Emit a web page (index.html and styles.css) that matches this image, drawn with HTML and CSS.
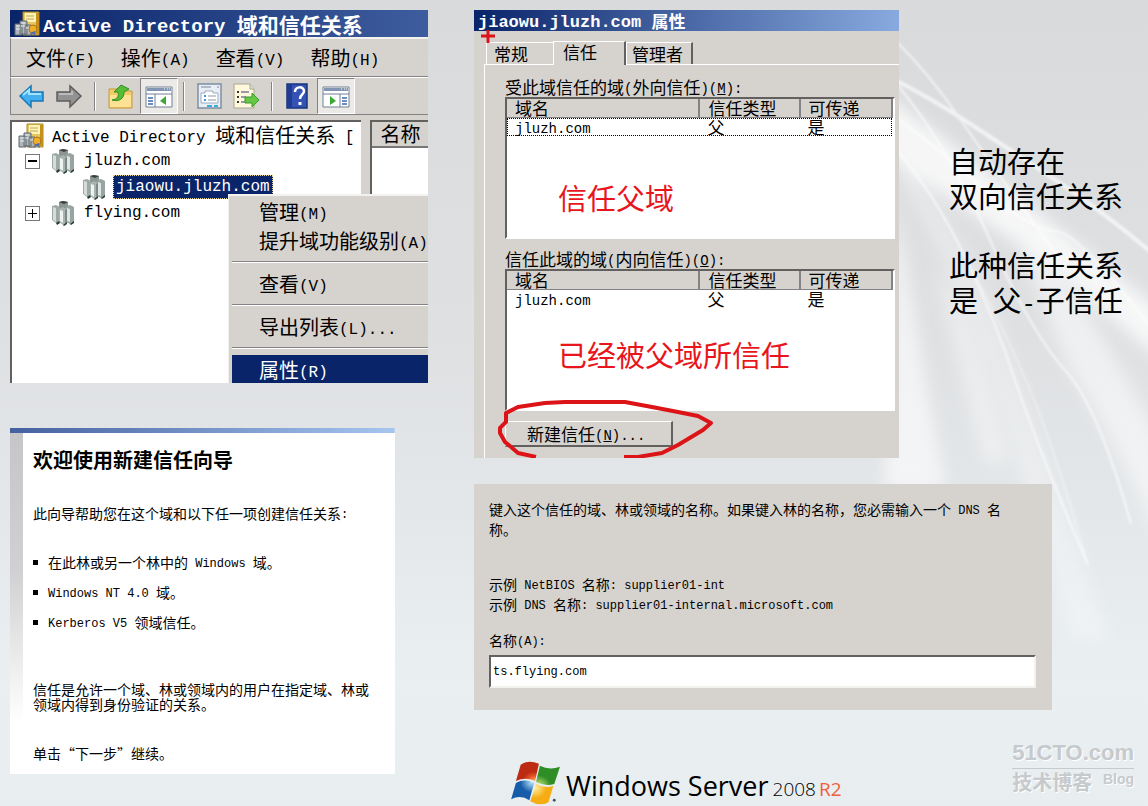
FILE: index.html
```
<!DOCTYPE html>
<html lang="zh-CN">

<head>
    <meta charset="UTF-8" />
    <meta name="viewport" content="width=device-width, initial-scale=1.0" />
    <title>Active Directory 域和信任关系</title>
    <link rel="stylesheet" href="styles.css">
</head>

<body>
    <svg class="backdrop" viewBox="0 0 1148 806" preserveAspectRatio="none" aria-hidden="true">
        <defs>
            <filter id="soft" x="-20%" y="-20%" width="140%" height="140%"><feGaussianBlur stdDeviation="8" /></filter>
            <filter id="thin"><feGaussianBlur stdDeviation="1" /></filter>
        </defs>
        <g fill="#fff" filter="url(#soft)">
            <path opacity=".75" d="M880 90 Q960 150 1010 190 T1160 310 V360 Q1060 270 990 225 T880 150z" />
            <path opacity=".5" d="M1020 245 Q1070 280 1110 350 T1160 440 V540 Q1110 430 1070 370z" />
            <path opacity=".3" d="M900 150 Q970 240 1015 370 T1110 640 L1070 640 Q1030 500 990 380 T900 180z" />
            <path opacity=".4" d="M935 270 Q970 300 1008 463 H985z" />
            <path opacity=".6" d="M895 200 Q915 320 945 490 H885z" />
        </g>
        <g fill="none" stroke="#fff" stroke-width="2" filter="url(#thin)" opacity=".65">
            <path d="M895 40 Q930 75 958 116 T1060 260" />
            <path d="M895 80 Q930 98 958 116 T1048 175 T1160 260" stroke-width="4" />
            <path d="M897 84 Q950 150 991 242 T1065 370 T1131 524" />
            <path d="M897 118 Q940 150 985 190 T1055 231 T1160 340" />
            <path d="M897 150 Q935 195 965 257 T1015 380 T1088 565" />
            <path d="M965 257 Q1000 320 1026 380 T1088 565" stroke-width="1" />
        </g>
    </svg>

    <!-- shared symbols for the console tree -->
    <svg class="symbols" aria-hidden="true">
        <symbol id="console" viewBox="0 0 26 25">
            <path d="M9 1h16v23H9z" fill="#e6c75d" stroke="#a98524" />
            <path d="M11 2h11v9H11z" fill="#fff4b5" />
            <path d="M12 5h8M12 8h8" stroke="#bea65d" />
            <path d="M22 2h3v21h-3z" fill="#c5911c" />
            <path d="M1 13h7v11H1zM6 10h7v13H6zM11 14h6v10h-6z" fill="#aeb6bc" stroke="#60686f" />
            <path d="M2 15h4M2 18h4M7 12h4M7 15h4M12 17h3" stroke="#eef3f5" />
            <circle cx="19" cy="18" r="4" fill="#efae28" stroke="#ad7316" />
            <path d="M18 21l-2 4 3-2 3 2-1-5" fill="#526ca8" />
        </symbol>
        <symbol id="domain" viewBox="0 0 24 25">
            <path d="M8 1l4-1 5 1v8H8z" fill="#8b9592" />
            <path d="M8 1l4-1 5 1-4 2z" fill="#39423f" />
            <path d="M1 5l4-1 4 2v14l-4 2-4-3z" fill="#9da9a6" />
            <path d="M2 6l3 1v14l-3-2z" fill="#d5dcda" />
            <path d="M15 5l4-1 4 2v15l-4 2-4-2z" fill="#98a4a1" />
            <path d="M16 7l3 1v13l-3-1z" fill="#dfe5e4" />
            <path d="M8 8l4-2 4 2v14l-4 2-4-3z" fill="#a9b4b1" />
            <path d="M9 9l3 1v12l-3-2z" fill="#eef2f1" />
            <path d="M14 9l2-1v13l-2 1z" fill="#7c8986" />
            <path d="M5 22l3-2 1 2-3 2zM12 24l4-3v2l-3 2zM19 23l4-3v2l-3 2z" fill="#243a30" />
        </symbol>
    </svg>

    <main class="board">
        <div class="column">
            <section class="window console">
                <header class="titlebar">
                    <svg class="app-icon"><use href="#console" /></svg>
                    <h1><span class="latin">Active Directory </span>域和信任关系</h1>
                </header>
                <nav class="menubar">
                    <button type="button">文件<span class="latin">(F)</span></button>
                    <button type="button">操作<span class="latin">(A)</span></button>
                    <button type="button">查看<span class="latin">(V)</span></button>
                    <button type="button">帮助<span class="latin">(H)</span></button>
                </nav>
                <div class="toolbar">
                    <button type="button" class="tool" aria-label="后退">
                        <svg viewBox="0 0 28 26"><path d="M2 13L13 3v6h12v9H13v6z" fill="#42b0ee" stroke="#1978b8" stroke-width="1.5" /><path d="M5 12l6-5v4h12" fill="none" stroke="#a2e4ff" stroke-width="2" /></svg>
                    </button>
                    <button type="button" class="tool" aria-label="前进">
                        <svg viewBox="0 0 28 26"><path d="M26 13L15 3v6H2v9h13v6z" fill="#929292" stroke="#5d5d5d" stroke-width="1.5" /><path d="M4 11h13V8" fill="none" stroke="#bbb" stroke-width="2" /></svg>
                    </button>
                    <span class="divider"></span>
                    <button type="button" class="tool" aria-label="上移">
                        <svg viewBox="0 0 28 26"><path d="M3 6h8l2 2h13v17H3z" fill="#f1cc67" stroke="#c9983c" /><path d="M4 12h21v12H4z" fill="#fce292" /><path d="M6 17c6-1 7-4 6-8H8l7-7 8 4-5 3c0 7-5 10-12 8z" fill="#58bd36" stroke="#318d23" /></svg>
                    </button>
                    <button type="button" class="tool pressed" aria-label="显示控制台树">
                        <svg viewBox="0 0 28 26"><path d="M1 4h26v20H1z" fill="#fff" stroke="#718096" /><path d="M2 5h24v3H2z" fill="#8295b1" /><path d="M1 11h26M10 11v13" stroke="#718096" /><path d="M3 15h5M3 18h5M3 21h5" stroke="#3c68ad" stroke-width="1.5" /><path d="M21 13v9l-6-4z" fill="#3ca935" /><path d="M19 6h1M22 6h1M24 6h1" stroke="#fff" /></svg>
                    </button>
                    <span class="divider"></span>
                    <button type="button" class="tool" aria-label="属性">
                        <svg viewBox="0 0 28 26"><path d="M3 1h23v24H3z" fill="#e9eef4" stroke="#7c8fa5" stroke-width="1.5" /><path d="M6 10h4V8h8v2h5v10H6z" fill="#fff" stroke="#9aabc1" /><path d="M6 4h10M22 4h2" stroke="#b1bac6" stroke-width="2" /><path d="M9 13h2M9 17h2" stroke="#3b9bd8" stroke-width="2" /><path d="M13 13h8M13 17h8" stroke="#8a98ab" /><path d="M12 23h5M19 23h4" stroke="#38afd9" stroke-width="2" /></svg>
                    </button>
                    <button type="button" class="tool export" aria-label="导出列表">
                        <svg viewBox="0 0 28 26"><path d="M2 1h16l4 5v19H2z" fill="#fff8dc" stroke="#aaa890" /><path d="M18 1v5h4" fill="#ddd" stroke="#aaa890" /><path d="M5 9h2M5 14h2M5 19h2" stroke="#333" stroke-width="2" /><path d="M9 9h8M9 14h5M9 19h5" stroke="#99a" stroke-width="2" /><path d="M13 14h7v-4l7 7-7 7v-4h-7z" fill="#65c744" stroke="#399d29" /></svg>
                    </button>
                    <span class="divider"></span>
                    <button type="button" class="tool" aria-label="帮助">
                        <svg viewBox="0 0 28 26"><path d="M4 1h20v24H4z" fill="#3453b4" stroke="#17347e" stroke-width="1.5" /><path d="M5 2h4v22H5z" fill="#203b91" /><path d="M12 9c0-6 9-6 9-1 0 4-4 3-4 8" fill="none" stroke="#fff" stroke-width="2.5" /><path d="M15.500 19h3v3h-3z" fill="#fff" /></svg>
                    </button>
                    <button type="button" class="tool pressed" aria-label="显示操作窗格">
                        <svg viewBox="0 0 28 26"><path d="M1 4h26v20H1z" fill="#fff" stroke="#718096" /><path d="M2 5h24v3H2z" fill="#8295b1" /><path d="M1 11h26M18 11v13" stroke="#718096" /><path d="M20 15h5M20 18h5M20 21h5" stroke="#3c68ad" stroke-width="1.5" /><path d="M8 13v9l6-4z" fill="#3ca935" /><path d="M19 6h1M22 6h1M24 6h1" stroke="#fff" /></svg>
                    </button>
                </div>
                <div class="panes">
                    <ul class="tree">
                        <li class="root"><svg><use href="#console" /></svg><span><span class="latin">Active Directory </span>域和信任关系<span class="latin"> [</span></span></li>
                        <li><span class="toggle minus"></span><svg><use href="#domain" /></svg><span class="latin">jluzh.com</span></li>
                        <li class="child"><svg><use href="#domain" /></svg><span class="latin selected">jiaowu.jluzh.com</span></li>
                        <li><span class="toggle plus"></span><svg><use href="#domain" /></svg><span class="latin">flying.com</span></li>
                    </ul>
                    <div class="details">
                        <div class="details-head">名称</div>
                    </div>
                </div>
                <div class="context-menu">
                    <button type="button">管理<span class="latin">(M)</span></button>
                    <button type="button">提升域功能级别<span class="latin">(A)</span></button>
                    <hr>
                    <button type="button">查看<span class="latin">(V)</span></button>
                    <hr>
                    <button type="button">导出列表<span class="latin">(L)...</span></button>
                    <hr>
                    <button type="button" class="active">属性<span class="latin">(R)</span></button>
                </div>
            </section>

            <section class="wizard">
                <div class="wizard-body">
                    <h2>欢迎使用新建信任向导</h2>
                    <p class="intro">此向导帮助您在这个域和以下任一项创建信任关系<span class="latin">:</span></p>
                    <ul class="choices">
                        <li>在此林或另一个林中的<span class="latin"> Windows </span>域。</li>
                        <li><span class="latin">Windows NT 4.0 </span>域。</li>
                        <li><span class="latin">Kerberos V5 </span>领域信任。</li>
                    </ul>
                    <p class="about">信任是允许一个域、林或领域内的用户在指定域、林或领域内得到身份验证的关系。</p>
                    <p>单击“下一步”继续。</p>
                </div>
            </section>
        </div>

        <div class="column right">
            <div class="top-row">
                <section class="window properties">
                    <header class="titlebar small">
                        <h2><span class="latin">jiaowu.jluzh.com </span>属性</h2>
                    </header>
                    <div class="tabs">
                        <button type="button" class="tab">常规</button>
                        <button type="button" class="tab current">信任</button>
                        <button type="button" class="tab">管理者</button>
                    </div>
                    <div class="tab-panel">
                        <h3>受此域信任的域<span class="latin">(</span>外向信任<span class="latin">)(<u>M</u>):</span></h3>
                        <div class="list-box">
                            <table>
                                <thead>
                                    <tr><th>域名</th><th>信任类型</th><th>可传递</th></tr>
                                </thead>
                                <tbody>
                                    <tr class="focused"><td><span class="latin">jluzh.com</span></td><td>父</td><td>是</td></tr>
                                </tbody>
                            </table>
                            <p class="remark outgoing">信任父域</p>
                        </div>
                        <h3>信任此域的域<span class="latin">(</span>内向信任<span class="latin">)(<u>O</u>):</span></h3>
                        <div class="list-box">
                            <table>
                                <thead>
                                    <tr><th>域名</th><th>信任类型</th><th>可传递</th></tr>
                                </thead>
                                <tbody>
                                    <tr><td><span class="latin">jluzh.com</span></td><td>父</td><td>是</td></tr>
                                </tbody>
                            </table>
                            <p class="remark">已经被父域所信任</p>
                        </div>
                        <button type="button" class="new-trust">新建信任<span class="latin">(<u>N</u>)...</span></button>
                    </div>
                    <svg class="scribble" viewBox="0 0 425 448" aria-hidden="true">
                        <path d="M7 26h14M14 20v13" stroke-width="3" />
                        <path d="M62 447L44 443 31 432 26 423V418L32 412V403L44 397 71 393 91 392H151L178 397 204 402 224 406 237 413 229 420 204 435 188 443 164 447H150" stroke-width="4" />
                    </svg>
                </section>
                <div class="notes">
                    <p>自动存在<br>双向信任关系</p>
                    <p>此种信任关系<br>是<span class="latin"> </span>父<span class="latin">-</span>子信任</p>
                </div>
            </div>

            <section class="name-form">
                <p class="prompt">键入这个信任的域、林或领域的名称。如果键入林的名称，您必需输入一个<span class="latin"> DNS </span>名称。</p>
                <p class="samples">示例<span class="latin"> NetBIOS </span>名称<span class="latin">: supplier01-int</span><br>示例<span class="latin"> DNS </span>名称<span class="latin">: supplier01-internal.microsoft.com</span></p>
                <label for="trust-name">名称<span class="latin">(A):</span></label>
                <input type="text" id="trust-name" value="ts.flying.com">
            </section>

            <footer class="footer">
                <div class="brand">
                    <svg class="flag" viewBox="0 0 54 48" aria-hidden="true">
                        <defs>
                            <radialGradient id="red" cx=".8" cy="1"><stop offset="0" stop-color="#ffb25c" /><stop offset=".5" stop-color="#e8582a" /><stop offset="1" stop-color="#bd2c12" /></radialGradient>
                            <radialGradient id="green" cx=".1" cy="1"><stop offset="0" stop-color="#c4e57a" /><stop offset="1" stop-color="#2f8d25" /></radialGradient>
                            <radialGradient id="blue" cx=".9" cy=".1"><stop offset="0" stop-color="#b0e0fa" /><stop offset="1" stop-color="#175ca8" /></radialGradient>
                            <radialGradient id="yellow" cx=".2" cy=".2"><stop offset="0" stop-color="#fff0a0" /><stop offset="1" stop-color="#f5ad13" /></radialGradient>
                        </defs>
                        <path d="M10 5Q18-1 29 4L25 22Q15 17 5 22z" fill="url(#red)" />
                        <path d="M30 6Q40 11 51 7L45 25Q36 28 26 23z" fill="url(#green)" />
                        <path d="M5 24Q14 19 24 24L19 42Q10 36 0 41z" fill="url(#blue)" />
                        <path d="M26 25Q35 30 44 27L39 44Q30 49 20 43z" fill="url(#yellow)" />
                        <circle cx="45" cy="42" r="1.500" fill="#455" />
                    </svg>
                    <p class="brand-name"><span class="product">Windows Server</span><span class="year">2008</span><span class="release">R2</span></p>
                </div>
                <div class="watermark">
                    <strong>51CTO.com</strong>
                    <div><span>技术博客</span><em>Blog</em></div>
                </div>
            </footer>
        </div>
    </main>
</body>

</html>
```
FILE: styles.css
```
* {
    box-sizing: border-box;
    margin: 0;
    padding: 0;
}

body {
    background: linear-gradient(#d9dadc, #dfe1e3 45%, #eaeff2 85%, #e8edf0);
    color: #000;
    font-family: "Noto Sans CJK SC", sans-serif;
    min-height: 100vh;
    overflow-x: hidden;
    position: relative;
}

button,
input {
    background: none;
    border: none;
    color: inherit;
    font: inherit;
    text-align: left;
}

ul {
    list-style: none;
}

.latin {
    font-family: "Liberation Mono", monospace;
    font-size: 16px;
    line-height: 1;
    vertical-align: 1px;
    white-space: pre;
}

.backdrop {
    height: 100%;
    left: 0;
    position: absolute;
    top: 0;
    width: 100%;
    z-index: -1;
}

.symbols {
    display: none;
}

.board {
    column-gap: 46px;
    display: grid;
    grid-template-columns: minmax(0, 418fr) minmax(0, 664fr);
    min-height: 100vh;
    padding: 10px 10px 0;
}

.column {
    display: flex;
    flex-direction: column;
}

.window {
    background: #d6d3ce;
    overflow: hidden;
    position: relative;
}

.titlebar {
    align-items: center;
    background: linear-gradient(90deg, #0a246a, #3e5d9e);
    color: #fff;
    display: flex;
    height: 27px;
    padding-left: 4px;
}

.titlebar h1,
.titlebar h2 {
    font-size: 21px;
    line-height: 26px;
    white-space: nowrap;
}

.titlebar h1 .latin {
    font-size: 19px;
}

.app-icon {
    height: 25px;
    margin-right: 3px;
    width: 26px;
}

/* console window */
.console {
    display: flex;
    flex-direction: column;
    font-size: 20px;
    line-height: 26px;
    min-height: 373px;
}

.menubar {
    border-bottom: 1px solid #848284;
    border-left: 1px solid #848284;
    border-top: 2px solid #f4f2ef;
    display: flex;
    gap: 26px;
    height: 40px;
    padding: 5px 15px;
    white-space: nowrap;
}

.toolbar {
    align-items: center;
    border-bottom: 1px solid #848284;
    border-left: 1px solid #848284;
    border-top: 1px solid #fff;
    display: flex;
    gap: 9px;
    height: 38px;
    padding-left: 7px;
}

.tool {
    flex: none;
    height: 26px;
    width: 28px;
}

.tool svg {
    display: block;
    height: 26px;
    width: 28px;
}

.pressed {
    background: #eceae6;
    border: 1px solid #fff;
    border-left-color: #848284;
    border-top-color: #848284;
    height: 36px;
    margin-left: -3px;
    padding: 4px;
    width: 38px;
}

.divider {
    border-left: 1px solid #848284;
    border-right: 1px solid #fff;
    height: 29px;
    margin: 0 1px 0 2px;
    width: 2px;
}

.pressed + .divider {
    margin-left: -4px;
}

.panes {
    display: flex;
    flex: 1;
    gap: 9px;
    padding-top: 5px;
}

.tree {
    background: #fff;
    border-left: 2px solid #63615f;
    border-top: 2px solid #63615f;
    flex: 348;
    overflow: hidden;
    padding-left: 10px;
    white-space: nowrap;
}

.tree li {
    align-items: center;
    display: flex;
    height: 26px;
}

.tree svg {
    flex: none;
    height: 25px;
    margin: 0 8px 0 10px;
    width: 26px;
}

.tree .root svg {
    margin: 0 8px 0 -4px;
}

.tree .child {
    padding-left: 49px;
}

.tree .child svg {
    margin-right: 6px;
}

.toggle {
    background:
        linear-gradient(#000, #000) center / 9px 2px no-repeat;
    border: 1px solid #777;
    flex: none;
    height: 15px;
    margin-left: 3px;
    width: 15px;
}

.plus {
    background:
        linear-gradient(#000, #000) center / 9px 1px no-repeat,
        linear-gradient(#000, #000) center / 1px 9px no-repeat;
}

.selected {
    background: #0a246a;
    border: 1px dotted #e8d58f;
    color: #fff;
    line-height: 22px;
    padding: 0 2px;
}

.details {
    background: #fff;
    border-left: 2px solid #63615f;
    border-top: 2px solid #63615f;
    flex: 58;
}

.details-head {
    background: #d6d3ce;
    border-bottom: 2px solid #777;
    line-height: 24px;
    padding-left: 9px;
    white-space: nowrap;
}

.context-menu {
    background: #d6d3ce;
    border-left: 1px solid #f4f2ef;
    border-top: 2px solid #f4f2ef;
    display: flex;
    flex-direction: column;
    left: 218px;
    padding: 1px 0 0 3px;
    position: absolute;
    right: 0;
    top: 184px;
}

.context-menu button {
    line-height: 29px;
    padding-left: 27px;
    white-space: nowrap;
}

.context-menu hr {
    border: none;
    border-bottom: 1px solid #fff;
    border-top: 1px solid #848284;
    margin: 6px 0;
}

.context-menu .active {
    background: #0a246a;
    color: #fff;
}

/* wizard page */
.wizard {
    background: linear-gradient(90deg, #43619f, #a6c5ef) top / 100% 5px no-repeat, #fff;
    font-size: 14px;
    line-height: 15px;
    margin-top: 45px;
    min-height: 346px;
    padding-top: 5px;
    width: 92%;
}

.wizard .latin,
.name-form .latin {
    font-size: 12px;
}

.wizard-body {
    background: linear-gradient(#c6c6c8, #d0d0d2 40%, #fff 85%) left / 13px 100% no-repeat;
    min-height: 341px;
    padding: 12px 14px 9px 23px;
}

.wizard h2 {
    font-size: 20px;
    line-height: 30px;
}

.intro {
    margin-top: 31px;
}

.choices {
    margin-top: 34px;
}

.choices li {
    margin-bottom: 15px;
}

.choices li::before {
    background: #000;
    content: "";
    display: inline-block;
    height: 5px;
    margin-right: 10px;
    vertical-align: 3px;
    width: 5px;
}

.about {
    margin: 52px 0 34px;
}

/* properties dialog */
.top-row {
    align-items: flex-start;
    display: flex;
}

.properties {
    flex: none;
    font-size: 17px;
    line-height: 20px;
    min-height: 448px;
    width: 64%;
}

.properties .latin {
    font-size: 14px;
}

.titlebar.small {
    background: linear-gradient(90deg, #0a246a, #88aadf);
    height: 21px;
}

.titlebar.small h2 {
    font-size: 17px;
    line-height: 21px;
}

.titlebar.small .latin {
    font-size: 17px;
}

.tabs {
    align-items: flex-end;
    display: flex;
    height: 33px;
    padding-left: 12px;
}

.tab {
    border-left: 1px solid #fff;
    border-top: 1px solid #fff;
    height: 22px;
    line-height: 21px;
    padding-left: 7px;
    width: 67px;
}

.tab:last-child {
    border-right: 2px solid #63615f;
    padding-left: 5px;
}

.tab.current {
    background: #d6d3ce;
    border-right: 2px solid #63615f;
    height: 24px;
    line-height: 20px;
    margin-bottom: -1px;
    padding: 0 0 3px 9px;
    position: relative;
    width: 73px;
}

.tab-panel {
    border-left: 1px solid #fff;
    border-top: 1px solid #fff;
    margin-left: 10px;
    min-height: 394px;
    padding: 12px 4px 10px 20px;
}

.tab-panel h3 {
    font-size: 17px;
    font-weight: 400;
    line-height: 20px;
}

.list-box {
    background: #fff;
    border: 2px solid #fff;
    border-left-color: #63615f;
    border-top-color: #63615f;
    height: 142px;
    margin-bottom: 10px;
}

.list-box table {
    border-collapse: collapse;
    table-layout: fixed;
    width: 100%;
}

.list-box th {
    background: #d6d3ce;
    border-bottom: 1px solid #848284;
    border-right: 2px solid #848284;
    font-weight: 400;
    height: 18px;
    line-height: 18px;
    padding-left: 8px;
    text-align: left;
}

.list-box th:first-child {
    width: 50%;
}

.list-box th:nth-child(2) {
    width: 26%;
}

.list-box td {
    line-height: 18px;
    padding-left: 8px;
}

.focused {
    outline: 1px dotted #000;
    outline-offset: -1px;
}

.remark {
    color: #e8161c;
    font-size: 29px;
    line-height: 40px;
    padding: 26px 0 0 51px;
}

.outgoing {
    padding-top: 41px;
}

.new-trust {
    border: 1px solid #fff;
    border-bottom: 2px solid #63615f;
    border-right: 2px solid #63615f;
    display: block;
    height: 26px;
    line-height: 22px;
    padding-left: 21px;
    width: 168px;
}

.scribble {
    fill: none;
    left: 0;
    pointer-events: none;
    position: absolute;
    stroke: #dc1418;
    stroke-linejoin: round;
    top: 0;
    width: 100%;
}

.notes {
    flex: 1;
    font-size: 29px;
    line-height: 35px;
    padding: 133px 0 0 50px;
    white-space: nowrap;
}

.notes .latin {
    font-size: 24px;
}

.notes p {
    margin-bottom: 34px;
}

/* trust name form */
.name-form {
    background: #d6d3ce;
    font-size: 14px;
    line-height: 20px;
    margin-top: 26px;
    min-height: 226px;
    padding: 15px 16px 22px 15px;
    width: 87%;
}

.prompt {
    margin-bottom: 35px;
    padding-right: 16px;
}

.samples {
    margin-bottom: 16px;
}

.name-form label {
    display: block;
    margin-bottom: 5px;
}

.name-form input {
    background: #fff;
    border: 2px solid #f4f2ef;
    border-left-color: #63615f;
    border-top-color: #63615f;
    display: block;
    font-family: "Liberation Mono", monospace;
    font-size: 12px;
    height: 33px;
    padding: 0 2px;
    width: 100%;
}

/* brand row */
.footer {
    display: flex;
    flex: 1;
    justify-content: space-between;
    padding: 28px 4px 0 36px;
}

.brand {
    align-items: flex-end;
    display: flex;
    font-family: "Open Sans", sans-serif;
    height: 68px;
}

.brand-name {
    line-height: 32px;
    white-space: nowrap;
}

.flag {
    height: 46px;
    margin-right: 2px;
    width: 54px;
}

.product {
    font-size: 27px;
}

.year {
    font-size: 19px;
    font-weight: 300;
    line-height: 1;
    margin: 0 3px 0 4px;
}

.release {
    color: #f0603c;
    font-size: 19px;
    line-height: 1;
}

.watermark {
    color: #c6cacd;
    font-family: "Liberation Sans", "Noto Sans CJK SC", sans-serif;
    text-shadow: 1px 1px #fff;
}

.watermark strong {
    border-bottom: 1px solid #c6cacd;
    display: block;
    font-size: 22px;
    line-height: 30px;
}

.watermark div {
    display: flex;
    font-weight: 700;
    justify-content: space-between;
}

.watermark span {
    font-size: 20px;
    line-height: 28px;
}

.watermark em {
    font-size: 14px;
    font-style: normal;
    line-height: 20px;
}
```
